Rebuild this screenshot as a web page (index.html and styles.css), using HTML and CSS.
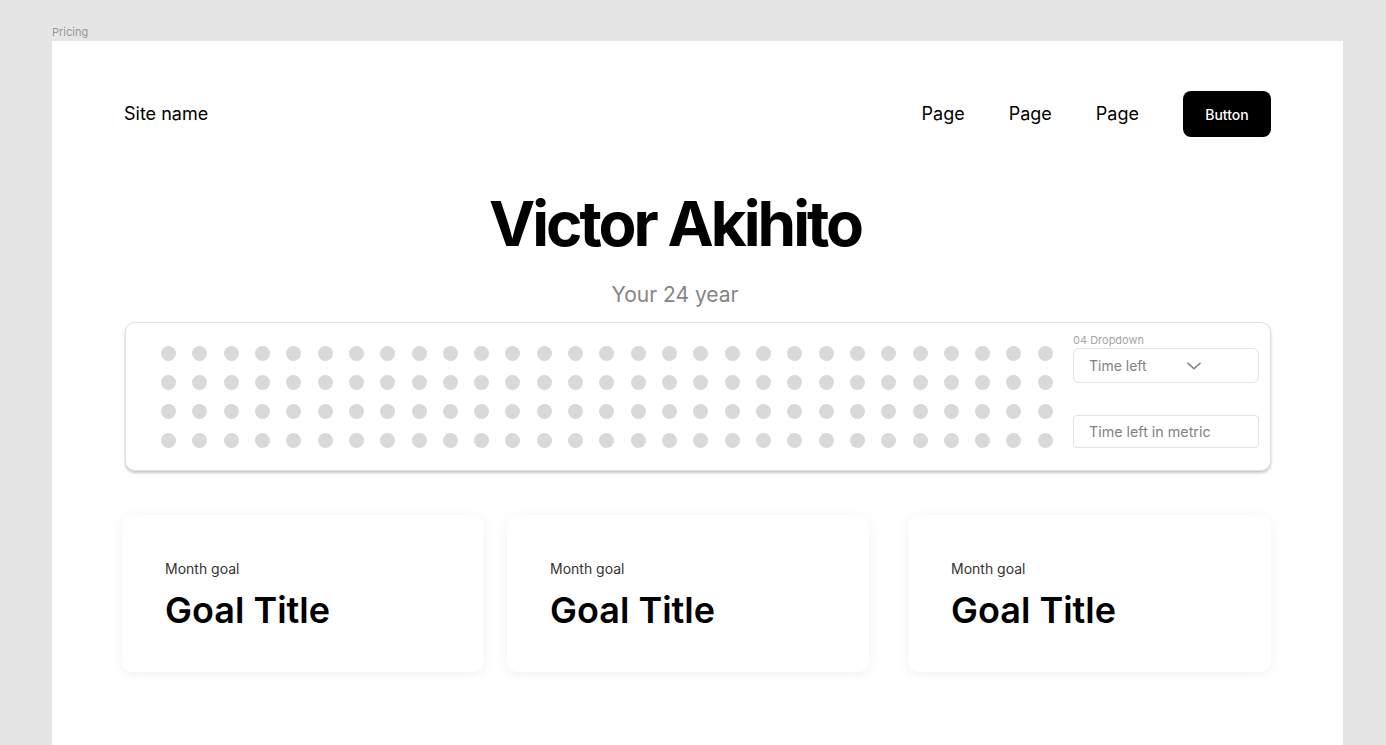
FILE: index.html
```html
<!DOCTYPE html>
<html lang="en">
<head>
<meta charset="utf-8">
<title>Pricing</title>
<link rel="stylesheet" href="styles.css">
</head>
<body>
  <div class="canvas-label">Pricing</div>
  <main class="frame">
    <header class="topbar">
      <div class="site-name">Site name</div>
      <nav class="nav">
        <a class="nav-link" href="#">Page</a>
        <a class="nav-link" href="#">Page</a>
        <a class="nav-link" href="#">Page</a>
        <a class="btn" href="#">Button</a>
      </nav>
    </header>

    <section class="hero">
      <h1 class="hero-title">Victor Akihito</h1>
      <p class="hero-sub">Your 24 year</p>
    </section>

    <section class="panel">
      <div class="dots">
        <span class="dot"></span><span class="dot"></span><span class="dot"></span><span class="dot"></span><span class="dot"></span><span class="dot"></span><span class="dot"></span><span class="dot"></span><span class="dot"></span><span class="dot"></span><span class="dot"></span><span class="dot"></span><span class="dot"></span><span class="dot"></span><span class="dot"></span><span class="dot"></span><span class="dot"></span><span class="dot"></span><span class="dot"></span><span class="dot"></span><span class="dot"></span><span class="dot"></span><span class="dot"></span><span class="dot"></span><span class="dot"></span><span class="dot"></span><span class="dot"></span><span class="dot"></span><span class="dot"></span>
        <span class="dot"></span><span class="dot"></span><span class="dot"></span><span class="dot"></span><span class="dot"></span><span class="dot"></span><span class="dot"></span><span class="dot"></span><span class="dot"></span><span class="dot"></span><span class="dot"></span><span class="dot"></span><span class="dot"></span><span class="dot"></span><span class="dot"></span><span class="dot"></span><span class="dot"></span><span class="dot"></span><span class="dot"></span><span class="dot"></span><span class="dot"></span><span class="dot"></span><span class="dot"></span><span class="dot"></span><span class="dot"></span><span class="dot"></span><span class="dot"></span><span class="dot"></span><span class="dot"></span>
        <span class="dot"></span><span class="dot"></span><span class="dot"></span><span class="dot"></span><span class="dot"></span><span class="dot"></span><span class="dot"></span><span class="dot"></span><span class="dot"></span><span class="dot"></span><span class="dot"></span><span class="dot"></span><span class="dot"></span><span class="dot"></span><span class="dot"></span><span class="dot"></span><span class="dot"></span><span class="dot"></span><span class="dot"></span><span class="dot"></span><span class="dot"></span><span class="dot"></span><span class="dot"></span><span class="dot"></span><span class="dot"></span><span class="dot"></span><span class="dot"></span><span class="dot"></span><span class="dot"></span>
        <span class="dot"></span><span class="dot"></span><span class="dot"></span><span class="dot"></span><span class="dot"></span><span class="dot"></span><span class="dot"></span><span class="dot"></span><span class="dot"></span><span class="dot"></span><span class="dot"></span><span class="dot"></span><span class="dot"></span><span class="dot"></span><span class="dot"></span><span class="dot"></span><span class="dot"></span><span class="dot"></span><span class="dot"></span><span class="dot"></span><span class="dot"></span><span class="dot"></span><span class="dot"></span><span class="dot"></span><span class="dot"></span><span class="dot"></span><span class="dot"></span><span class="dot"></span><span class="dot"></span>
      </div>
      <div class="controls">
        <div class="control-label">04 Dropdown</div>
        <div class="select">
          <span class="select-text">Time left</span>
          <svg class="chevron" width="14" height="8" viewBox="0 0 14 8" aria-hidden="true">
            <path d="M1 1.2 L7 6.8 L13 1.2" fill="none" stroke="#7a7a7a" stroke-width="1.5" stroke-linecap="round" stroke-linejoin="round"/>
          </svg>
        </div>
        <div class="input">Time left in metric</div>
      </div>
    </section>

    <section class="goals">
      <article class="goal-card">
        <div class="goal-kicker">Month goal</div>
        <div class="goal-title">Goal Title</div>
      </article>
      <article class="goal-card">
        <div class="goal-kicker">Month goal</div>
        <div class="goal-title">Goal Title</div>
      </article>
      <article class="goal-card goal-card-last">
        <div class="goal-kicker">Month goal</div>
        <div class="goal-title">Goal Title</div>
      </article>
    </section>
  </main>
</body>
</html>
```

FILE: styles.css
```css
* {
  box-sizing: border-box;
}

html, body {
  margin: 0;
  padding: 0;
}

body {
  background: #e5e5e5;
  font-family: "Inter", "Noto Sans", sans-serif;
  color: #000;
  padding: 26px 43px 0 52px;
  overflow: hidden;
}

.canvas-label {
  font-size: 11px;
  line-height: 12px;
  height: 15px;
  color: #9a9a9a;
}

.frame {
  background: #ffffff;
  min-height: 720px;
  padding: 50px 72px 0 72px;
}

/* Header */
.topbar {
  display: flex;
  align-items: center;
  justify-content: space-between;
  height: 46px;
}

.site-name {
  font-size: 18px;
  line-height: 22px;
  font-weight: 400;
}

.nav {
  display: flex;
  align-items: center;
  gap: 44px;
}

.nav-link {
  font-size: 18px;
  line-height: 22px;
  color: #000;
  text-decoration: none;
}

.btn {
  display: flex;
  align-items: center;
  justify-content: center;
  width: 88px;
  height: 46px;
  background: #000;
  color: #fff;
  border-radius: 8px;
  font-size: 14px;
  font-weight: 500;
  text-decoration: none;
}

/* Hero */
.hero {
  text-align: center;
  padding: 48px 45px 0 0;
}

.hero-title {
  margin: 0;
  font-size: 62px;
  line-height: 77px;
  font-weight: 700;
  letter-spacing: -3px;
}

.hero-sub {
  margin: 21px 0 0 0;
  font-size: 21px;
  line-height: 24px;
  color: #858585;
}

/* Panel */
.panel {
  display: flex;
  gap: 20px;
  margin: 15px 0 0 1px;
  border: 1px solid #e0e0e0;
  border-radius: 10px;
  background: #fff;
  box-shadow: 0 2px 3px rgba(0, 0, 0, 0.22);
  padding: 11px 11px 22px 35px;
}

.dots {
  flex: 1;
  display: grid;
  grid-template-columns: repeat(29, 15px);
  justify-content: space-between;
  row-gap: 13.7px;
  margin-top: 12px;
}

.dot {
  width: 15px;
  height: 15px;
  border-radius: 50%;
  background: #d9d9d9;
}

.controls {
  width: 186px;
  display: flex;
  flex-direction: column;
}

.control-label {
  font-size: 11px;
  line-height: 13px;
  color: #a6a6a6;
  margin-bottom: 1px;
}

.select {
  display: flex;
  align-items: center;
  height: 35px;
  border: 1px solid #e3e3e3;
  border-radius: 6px;
  padding: 0 14px 0 15px;
}

.select-text {
  font-size: 14px;
  color: #828282;
  width: 98px;
}

.chevron {
  display: block;
}

.input {
  display: flex;
  align-items: center;
  height: 33px;
  margin-top: 32px;
  border: 1px solid #e3e3e3;
  border-radius: 4px;
  padding: 0 14px 0 15px;
  font-size: 14.3px;
  color: #828282;
}

/* Goals */
.goals {
  display: flex;
  gap: 23px;
  margin: 44px 0 0 -2px;
}

.goal-card {
  width: 362px;
  height: 157px;
  background: #fff;
  border-radius: 10px;
  box-shadow: 0 2px 12px rgba(0, 0, 0, 0.06);
  padding: 44px 43px 0 43px;
}

.goal-card-last {
  margin-left: auto;
  width: 363px;
}

.goal-kicker {
  font-size: 14px;
  line-height: 20px;
  color: #333;
}

.goal-title {
  margin-top: 9px;
  font-size: 36px;
  line-height: 44px;
  font-weight: 600;
}
```
